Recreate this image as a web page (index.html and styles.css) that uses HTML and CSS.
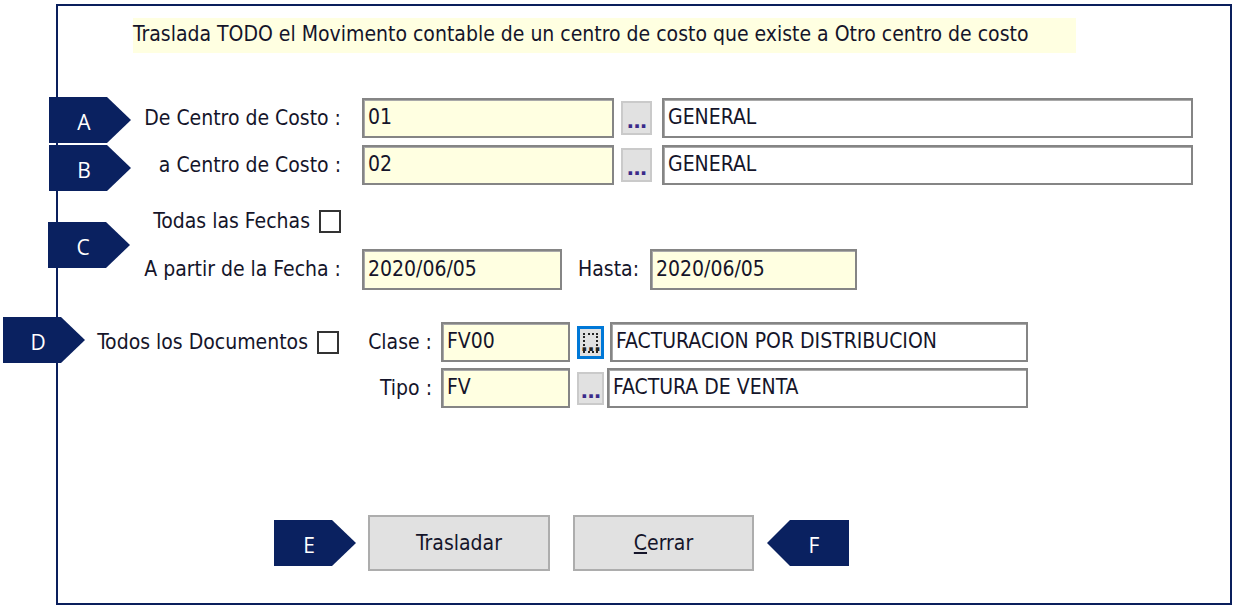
FILE: index.html
```html
<!DOCTYPE html>
<html>
<head>
    <meta charset="utf-8">
    <title>Traslado de centro de costo</title>
    <link rel="stylesheet" href="styles.css">
</head>
<body>
    <div class="frame">
        <!--marcas A-D-->
        <div class="tag tag-a">A</div>
        <div class="tag tag-b">B</div>
        <div class="tag tag-c">C</div>
        <div class="tag tag-d">D</div>

        <div class="banner">Traslada TODO el Movimento contable de un centro de costo que existe a Otro centro de costo</div>

        <!--centros de costo-->
        <div class="row row-a">
            <div class="lbl lbl-main">De Centro de Costo :</div>
            <input class="field field-code" type="text" value="01" readonly>
            <span class="dots">...</span>
            <input class="field field-name" type="text" value="GENERAL" readonly>
        </div>
        <div class="row row-b">
            <div class="lbl lbl-main">a Centro de Costo :</div>
            <input class="field field-code" type="text" value="02" readonly>
            <span class="dots">...</span>
            <input class="field field-name" type="text" value="GENERAL" readonly>
        </div>

        <!--fechas-->
        <div class="row row-all-dates">
            <div class="lbl lbl-check">Todas las Fechas</div>
            <span class="check"></span>
        </div>
        <div class="row row-date">
            <div class="lbl lbl-main">A partir de la Fecha :</div>
            <input class="field field-date" type="text" value="2020/06/05" readonly>
            <div class="lbl lbl-until">Hasta:</div>
            <input class="field field-date2" type="text" value="2020/06/05" readonly>
        </div>

        <!--documentos-->
        <div class="row row-docs">
            <div class="lbl lbl-docs">Todos los Documentos</div>
            <span class="check"></span>
            <div class="lbl lbl-class">Clase :</div>
            <input class="field field-doc" type="text" value="FV00" readonly>
            <span class="dots dots-small dots-focus">...</span>
            <input class="field field-docname" type="text" value="FACTURACION POR DISTRIBUCION" readonly>
        </div>
        <div class="row row-type">
            <div class="lbl lbl-type">Tipo :</div>
            <input class="field field-doc" type="text" value="FV" readonly>
            <span class="dots dots-small">...</span>
            <input class="field field-docname2" type="text" value="FACTURA DE VENTA" readonly>
        </div>

        <!--botones-->
        <div class="row row-buttons">
            <div class="tag tag-e">E</div>
            <button class="btn btn-move">Trasladar</button>
            <button class="btn btn-close"><u>C</u>errar</button>
            <div class="tag tag-f">F</div>
        </div>
    </div>
</body>
</html>
```

FILE: styles.css
```css
*{
    margin: 0;
    padding: 0;
    box-sizing: border-box;
}

html, body{
    width: 100%;
    height: 100%;
    background-color: #fff;
    overflow: hidden;
}

body{
    font-family: "DejaVu Sans Condensed", "DejaVu Sans", sans-serif;
    font-size: 21px;
    color: #15152a;
}

.frame{
    position: relative;
    margin: 4px 0 0 56px;
    width: 1176px;
    height: 601px;
    border: 2px solid #0a1f5c;
}

.banner{
    margin: 12px 0 0 75px;
    width: 943px;
    height: 35px;
    line-height: 32px;
    background-color: #ffffe1;
    white-space: nowrap;
}

.row{
    display: flex;
    align-items: center;
}

.row-a{ margin-top: 45px; height: 40px; }
.row-b{ margin-top: 7px; height: 40px; }
.row-all-dates{ margin-top: 24px; height: 24px; }
.row-date{ margin-top: 16px; height: 41px; }
.row-docs{ margin-top: 32px; height: 40px; }
.row-type{ margin-top: 6px; height: 40px; }
.row-buttons{ margin-top: 107px; height: 56px; padding-left: 216px; }

.lbl{
    white-space: nowrap;
    text-align: right;
    flex: none;
    padding-bottom: 1px;
}

.lbl-main{ width: 304px; padding-right: 21px; }
.lbl-check{ width: 261px; padding-right: 9px; }
.lbl-docs{ width: 259px; padding-right: 9px; }
.lbl-class{ width: 102px; padding-right: 9px; }
.lbl-type{ width: 383px; padding-right: 9px; }
.lbl-until{ width: 88px; padding-right: 11px; }

.field{
    flex: none;
    height: 100%;
    border: 2px solid #858585;
    box-shadow: inset 1px 1px 0 #a9a9a9;
    background-color: #ffffe1;
    font-family: inherit;
    font-size: 21px;
    color: #15152a;
    padding: 0 4px 2px;
    outline: none;
}

.field-code{ width: 252px; }
.field-name{ width: 531px; margin-left: 10px; background-color: #fff; }
.field-date{ width: 200px; }
.field-date2{ width: 207px; }
.field-doc{ width: 129px; }
.field-docname{ width: 418px; margin-left: 6px; background-color: #fff; }
.field-docname2{ width: 421px; margin-left: 3px; background-color: #fff; }

/* boton de busqueda "..." */
.dots{
    flex: none;
    display: flex;
    align-items: flex-end;
    justify-content: center;
    width: 31px;
    height: 34px;
    margin-left: 7px;
    background-color: #e1e1e1;
    border: 2px solid #cacaca;
    color: #3a2a8a;
    font-family: "DejaVu Sans", sans-serif;
    font-weight: bold;
    font-size: 20px;
    line-height: 24px;
    letter-spacing: -1px;
}

.dots-small{ width: 27px; height: 33px; }

.dots-focus{
    position: relative;
    border: 3px solid #0078d7;
    color: #222;
}

.dots-focus::before{
    content: "";
    position: absolute;
    left: 3px;
    top: 4px;
    right: 3px;
    bottom: 3px;
    border: 2px dotted #222;
}

.check{
    flex: none;
    width: 22px;
    height: 23px;
    border: 2px solid #333;
    background-color: #fff;
}

.btn{
    flex: none;
    height: 56px;
    width: 182px;
    margin-left: 12px;
    background-color: #e1e1e1;
    border: 2px solid #adadad;
    font-family: inherit;
    font-size: 21px;
    color: #15152a;
    padding-bottom: 1px;
}

.btn-close{ margin-left: 23px; width: 181px; }

/* marcas azules */
.tag{
    flex: none;
    width: 82px;
    height: 46px;
    line-height: 50px;
    background-color: #0a2160;
    color: #fff;
    font-family: "Open Sans", "Noto Sans", sans-serif;
    font-size: 21px;
    text-align: center;
    padding-right: 12px;
    clip-path: polygon(0 0, 58px 0, 100% 50%, 58px 100%, 0 100%);
}

.tag-a{ position: absolute; left: -9px; top: 91px; }
.tag-b{ position: absolute; left: -9px; top: 139px; }
.tag-c{ position: absolute; left: -10px; top: 216px; }
.tag-d{ position: absolute; left: -55px; top: 311px; }

.tag-f{
    margin-left: 13px;
    padding-right: 0;
    padding-left: 12px;
    clip-path: polygon(23px 0, 100% 0, 100% 100%, 23px 100%, 0 50%);
}
```
